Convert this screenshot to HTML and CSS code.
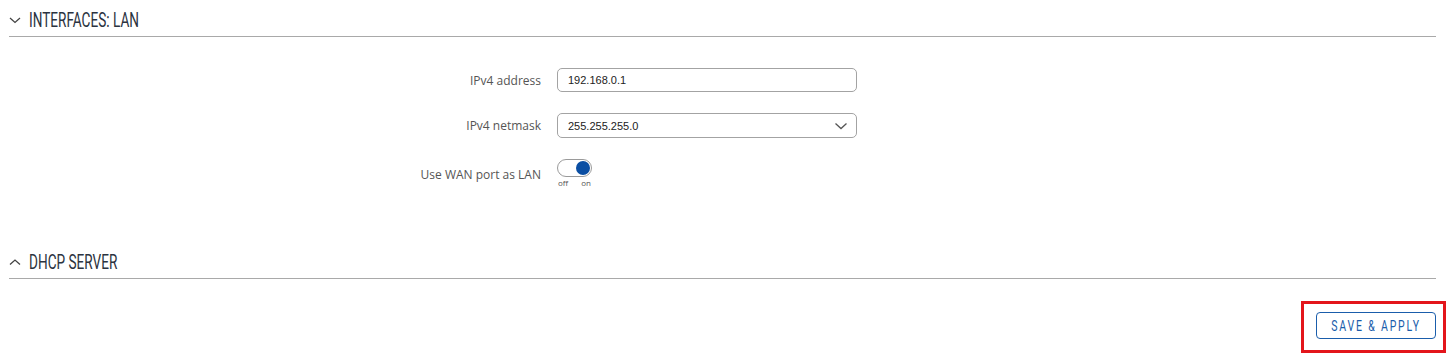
FILE: index.html
```html
<!DOCTYPE html>
<html lang="en">

<head>
    <meta charset="UTF-8">
    <meta name="viewport" content="width=device-width, initial-scale=1.0">
    <title>Interfaces: LAN</title>
    <link rel="stylesheet" href="styles.css">
</head>

<body>
    <div class="page">
        <div class="section-title">
            <svg class="chevron" width="12" height="8" viewBox="0 0 12 8">
                <path d="M1 2 L6 6.5 L11 2" fill="none" stroke="#444" stroke-width="1.3"/>
            </svg>
            <h3>INTERFACES: LAN</h3>
        </div>

        <div class="section-body">
            <div class="form-row">
                <label>IPv4 address</label>
                <input class="text-input" type="text" value="192.168.0.1">
            </div>
            <div class="form-row">
                <label>IPv4 netmask</label>
                <div class="select">
                    <span>255.255.255.0</span>
                    <svg width="14" height="8" viewBox="0 0 14 8">
                        <path d="M1.5 1.5 L7 6.5 L12.5 1.5" fill="none" stroke="#555" stroke-width="1.3"/>
                    </svg>
                </div>
            </div>
            <div class="form-row toggle-row">
                <label>Use WAN port as LAN</label>
                <div class="toggle">
                    <div class="track"><span class="knob"></span></div>
                    <div class="toggle-labels"><span>off</span><span>on</span></div>
                </div>
            </div>
        </div>

        <div class="section-title">
            <svg class="chevron" width="12" height="8" viewBox="0 0 12 8">
                <path d="M1 6.5 L6 2 L11 6.5" fill="none" stroke="#444" stroke-width="1.3"/>
            </svg>
            <h3>DHCP SERVER</h3>
        </div>

        <div class="actions">
            <div class="highlight">
                <button class="btn-save"><span>SAVE &amp; APPLY</span></button>
            </div>
        </div>
    </div>
</body>

</html>
```

FILE: styles.css
```css
body {
    margin: 0;
    background-color: #fff;
    font-family: 'Open Sans', sans-serif;
    color: #404040;
}

.page {
    padding: 0 20px 0 9px;
}

.section-title {
    display: flex;
    align-items: center;
    gap: 8px;
    height: 37px;
    border-bottom: 1px solid #a9a9a9;
    padding-top: 4px;
    box-sizing: border-box;
}

/* no condensed face installed, so squeeze Roboto */
.section-title h3 {
    margin: 0;
    font-family: Roboto, sans-serif;
    font-weight: normal;
    font-size: 20px;
    color: #2b3340;
    white-space: nowrap;
    transform: scaleX(0.68);
    transform-origin: left center;
}

.section-body {
    padding: 31px 0 53px;
}

.form-row {
    display: grid;
    grid-template-columns: 532px 300px;
    column-gap: 16px;
    align-items: center;
    margin-bottom: 21px;
}

.form-row label {
    text-align: right;
    font-size: 12px;
    color: #555;
}

.text-input,
.select {
    height: 24px;
    box-sizing: border-box;
    border: 1px solid #a3a3a3;
    border-radius: 5px;
    padding: 0 10px;
    font-family: 'Liberation Sans', Arial, sans-serif;
    font-size: 11px;
    color: #222;
}

.text-input {
    width: 300px;
    outline: none;
}

.select {
    height: 25px;
    display: flex;
    align-items: center;
    justify-content: space-between;
    padding-right: 8px;
}

.toggle-row {
    align-items: start;
    margin-bottom: 0;
}

.toggle-row label {
    padding-top: 7px;
}

.toggle {
    display: flex;
    flex-direction: column;
    width: 36px;
}

.track {
    width: 35px;
    height: 18px;
    box-sizing: border-box;
    border: 1px solid #9a9a9a;
    border-radius: 9px;
    position: relative;
}

.knob {
    position: absolute;
    right: 1px;
    top: 1px;
    width: 14px;
    height: 14px;
    border-radius: 50%;
    background-color: #0a4ea3;
}

.toggle-labels {
    display: flex;
    justify-content: space-between;
    padding: 0 2px 0 1px;
    font-size: 8px;
    color: #555;
    line-height: 12px;
}

.actions {
    display: flex;
    justify-content: flex-end;
    margin-right: -10px;
    padding-top: 22px;
}

.highlight {
    border: 3px solid #e3151b;
    padding: 8px 7px 11px 12px;
}

.btn-save {
    display: flex;
    align-items: center;
    justify-content: center;
    height: 27px;
    width: 120px;
    background: #fff;
    border: 1px solid #1a5dab;
    border-radius: 4px;
    color: #1a5dab;
    cursor: pointer;
}

.btn-save span {
    font-family: Roboto, sans-serif;
    font-size: 15px;
    letter-spacing: 2.6px;
    white-space: nowrap;
    transform: scaleX(0.7);
}
```
